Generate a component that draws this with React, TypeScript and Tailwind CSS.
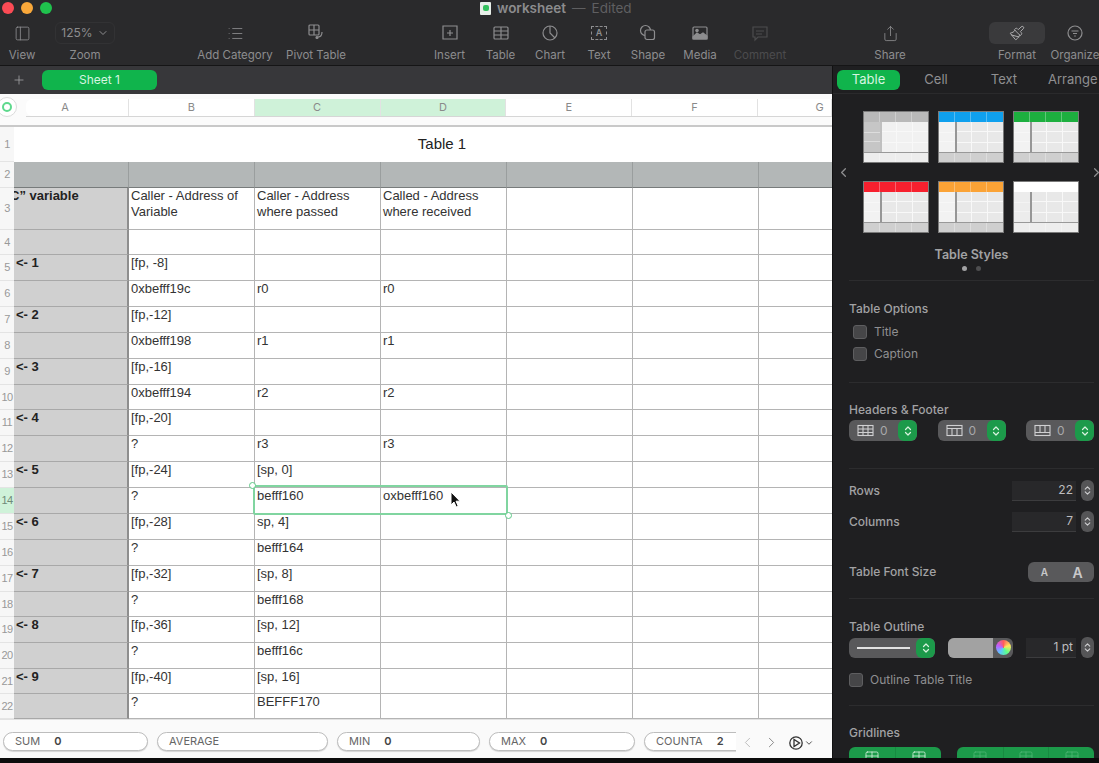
import React from 'react';
import { ChevronDown, ChevronLeft, ChevronRight, ChevronsUpDown, List, PanelLeft, Paintbrush, Plus, Share, Table as TableIcon } from 'lucide-react';

const ui = "font-['Inter','Liberation_Sans',sans-serif]";

const ROWS: string[][] = [
  [],
  [],
  ['C” variable', 'Caller - Address of Variable', 'Caller - Address where passed', 'Called - Address where received'],
  [],
  ['<- 1', '[fp, -8]'],
  ['', '0xbefff19c', 'r0', 'r0'],
  ['<- 2', '[fp,-12]'],
  ['', '0xbefff198', 'r1', 'r1'],
  ['<- 3', '[fp,-16]'],
  ['', '0xbefff194', 'r2', 'r2'],
  ['<- 4', '[fp,-20]'],
  ['', '?', 'r3', 'r3'],
  ['<- 5', '[fp,-24]', '[sp, 0]'],
  ['', '?', 'befff160', 'oxbefff160'],
  ['<- 6', '[fp,-28]', 'sp, 4]'],
  ['', '?', 'befff164'],
  ['<- 7', '[fp,-32]', '[sp, 8]'],
  ['', '?', 'befff168'],
  ['<- 8', '[fp,-36]', '[sp, 12]'],
  ['', '?', 'befff16c'],
  ['<- 9', '[fp,-40]', '[sp, 16]'],
  ['', '?', 'BEFFF170'],
];

const Glyph = ({ children, className = '' }: { children: React.ReactNode; className?: string }) => (
  <svg width="20" height="20" viewBox="0 0 20 20" fill="none" stroke="currentColor" strokeWidth="1.2" className={className}>
    {children}
  </svg>
);

const ToolItem = ({ label, width, children, dim, active }: { label: string; width: string; children: React.ReactNode; dim?: boolean; active?: boolean }) => (
  <div className={`flex shrink-0 flex-col items-center ${width} ${dim ? 'text-[#4c4c4e]' : 'text-[#8d8d8f]'}`}>
    <div className={`flex h-[22px] items-center justify-center ${active ? 'w-[56px] rounded-md bg-[#3a3a3c] text-[#b4b4b6]' : ''}`}>{children}</div>
    <span className="mt-[4px] whitespace-nowrap text-[11.5px] leading-[14px]">{label}</span>
  </div>
);

const Toolbar = () => (
  <div className="flex h-[66px] shrink-0 flex-col border-b border-[#151516] bg-[#2a2a2c]">
    <div className="relative flex h-[16px] items-center">
      <div className="ml-[2px] flex gap-[7px]">
        <span className="size-[12px] rounded-full bg-[#fb4b55]" />
        <span className="size-[12px] rounded-full bg-[#f9a83a]" />
        <span className="size-[12px] rounded-full bg-[#1fc24d]" />
      </div>
      <div className="ml-[428px] flex items-center gap-[6px] text-[13.5px] leading-[14px] text-[#8c8c8e]">
        <span className="flex h-[13px] w-[11px] items-center justify-center rounded-[1px] bg-[#e8efe9]">
          <span className="size-[6px] rounded-[2px] bg-[#33c15e]" />
        </span>
        <span className="font-semibold">worksheet</span>
        <span className="text-[#5f5f61]">—</span>
        <span className="text-[#5f5f61]">Edited</span>
      </div>
    </div>
    <div className="mt-[6px] flex items-start">
      <ToolItem label="View" width="w-[44px]"><PanelLeft size={17} strokeWidth={1.2} /></ToolItem>
      <ToolItem label="Zoom" width="w-[82px]">
        <div className="flex h-[22px] w-[60px] items-center justify-center gap-1 rounded-md border border-[#323234] text-[12px]">
          125% <ChevronDown size={12} />
        </div>
      </ToolItem>
      <div className="w-[64px] shrink-0" />
      <ToolItem label="Add Category" width="w-[90px]"><List size={17} strokeWidth={1.2} /></ToolItem>
      <ToolItem label="Pivot Table" width="w-[72px]">
        <Glyph>
          <rect x="3" y="2" width="10" height="10" rx="1" />
          <path d="M3 7h10M8 2v10M16 9c0 3-1.500 5-4 5" />
          <circle cx="11" cy="14.500" r="1" fill="currentColor" />
        </Glyph>
      </ToolItem>
      <div className="w-[73px] shrink-0" />
      <ToolItem label="Insert" width="w-[49px]">
        <Glyph>
          <path d="M3 3h14v13H3z" />
          <path d="M10 7v6M7 10h6" />
        </Glyph>
      </ToolItem>
      <ToolItem label="Table" width="w-[53px]">
        <Glyph>
          <rect x="3" y="4" width="14" height="12" rx="1" />
          <path d="M3 8h14M3 12h14M10 4v12" />
        </Glyph>
      </ToolItem>
      <ToolItem label="Chart" width="w-[46px]">
        <Glyph>
          <circle cx="10" cy="10" r="7" />
          <path d="M10 3v7l5 5" />
        </Glyph>
      </ToolItem>
      <ToolItem label="Text" width="w-[52px]">
        <div className="flex h-[14px] w-[16px] items-center justify-center border border-dashed border-current text-[9px] font-semibold">A</div>
      </ToolItem>
      <ToolItem label="Shape" width="w-[46px]">
        <Glyph>
          <circle cx="7.500" cy="7.500" r="5" />
          <rect x="7" y="7" width="9.500" height="9.500" rx="2" fill="#2a2a2c" />
        </Glyph>
      </ToolItem>
      <ToolItem label="Media" width="w-[58px]">
        <Glyph>
          <rect x="3" y="4" width="14" height="12" rx="1" />
          <path d="M3 14l4-4 3 2 3-2 4 3v3H3z" fill="currentColor" />
          <circle cx="7" cy="7.500" r="1.200" fill="currentColor" />
        </Glyph>
      </ToolItem>
      <ToolItem label="Comment" width="w-[62px]" dim>
        <Glyph>
          <path d="M3 4h14v10H8l-3 3v-3H3z" />
          <path d="M6 8h8M6 11h6" />
        </Glyph>
      </ToolItem>
      <div className="w-[69px] shrink-0" />
      <ToolItem label="Share" width="w-[60px]"><Share size={17} strokeWidth={1.2} /></ToolItem>
      <div className="w-[65px] shrink-0" />
      <ToolItem label="Format" width="w-[64px]" active><Paintbrush size={16} strokeWidth={1.4} /></ToolItem>
      <ToolItem label="Organize" width="w-[52px]">
        <Glyph>
          <circle cx="10" cy="10" r="7" />
          <path d="M6.500 8h7M8 10.500h4M9.200 13h1.600" />
        </Glyph>
      </ToolItem>
    </div>
  </div>
);

const COLUMN_HEADERS: [string, string][] = [
  ['A', 'w-[103px] rounded-l-md bg-white pr-[24px]'],
  ['B', 'w-[126px] bg-white'],
  ['C', 'w-[126px] bg-[#cff2d9]'],
  ['D', 'w-[126px] bg-[#cff2d9]'],
  ['E', 'w-[126px] bg-white'],
  ['F', 'w-[126px] bg-white'],
  ['G', 'w-[74px] bg-white pl-[50px]'],
];

const ColumnRuler = () => (
  <div className="flex h-[33px] shrink-0 items-start border-b-2 border-[#c9c9c9] bg-[#fbfbfb]">
    <div className="mt-[3px] flex size-[20px] -translate-x-[3px] items-center justify-center rounded-full border border-[#dcdcdc] bg-white">
      <span className="size-[10px] rounded-full border-2 border-[#5ed98d]" />
    </div>
    <div className="ml-[6px] mt-[5px] flex overflow-hidden border-b border-[#d6d6d6]">
      {COLUMN_HEADERS.map(([name, cls]) => (
        <div key={name} className={`flex h-[17px] items-center justify-center border-r border-[#e2e2e2] text-[11px] text-[#8a8a8a] ${cls}`}>
          {name}
        </div>
      ))}
    </div>
  </div>
);

const SheetGrid = () => (
  <div className="relative h-[592px] shrink-0 overflow-hidden bg-white font-['Liberation_Sans',sans-serif]">
    <div className="grid w-[885px] grid-cols-[14px_115px_126px_126px_126px_126px_126px_126px] grid-rows-[35px_26px_42px_25px_26px_26px_26px_26px_26px_25px_26px_26px_26px_26px_26px_26px_26px_25px_26px_26px_25px_25px]">
      {ROWS.map((row, r) => (
        <React.Fragment key={r}>
          <div className={`flex items-center justify-center overflow-hidden border-b border-[#e4e4e4] text-[11px] tracking-[-0.5px] ${r === 13 ? 'bg-[#cff2d9] text-[#6f8a78]' : 'bg-[#f7f7f7] text-[#999999]'}`}>
            {r + 1}
          </div>
          {r === 0 ? (
            <div className="col-span-7 flex items-center justify-center pr-[15px] text-[15px] text-[#222222]">Table 1</div>
          ) : (
            [0, 1, 2, 3, 4, 5, 6].map((c) => (
              <div
                key={c}
                className={`overflow-hidden border-b text-[13px] leading-[16px] ${
                  r === 1
                    ? 'border-[#777b7b] border-r-[#9a9e9e] bg-[#b3b7b7] border-r'
                    : c === 0
                      ? 'border-[#a8a8a8] border-r-[#8e8e8e] border-r-2 bg-[#d0d0d0] font-bold text-[#222222]'
                      : 'border-[#b4b4b4] border-r border-r-[#b4b4b4] text-[#333333]'
                } ${c === 0 ? (r === 2 ? '' : 'pl-[2px]') : 'pl-[2px]'}`}
              >
                <span className={`block ${c === 0 && r === 2 ? '-ml-[4px] whitespace-nowrap' : ''}`}>{row[c] ?? ''}</span>
              </div>
            ))
          )}
        </React.Fragment>
      ))}
    </div>
    {/* selection over row 14, C:D */}
    <div className="absolute left-[253px] top-[358px] h-[30px] w-[255px] rounded-[2px] border-2 border-[#80d5a0]" />
    <span className="absolute left-[249px] top-[355px] size-[7px] rounded-full border border-[#5ec987] bg-white" />
    <span className="absolute left-[505px] top-[385px] size-[7px] rounded-full border border-[#5ec987] bg-white" />
    <svg width="12" height="18" viewBox="0 0 12 18" className="absolute left-[450px] top-[364px]">
      <path d="M1 1v13l3-3 2.200 5 2-1-2.200-4.800H10z" fill="#111111" stroke="#ffffff" strokeWidth="1" />
    </svg>
  </div>
);

const Formula = ({ name, value, width }: { name: string; value?: string; width: string }) => (
  <div className={`flex h-[19px] shrink-0 items-center gap-[14px] rounded-full border border-[#bdbdbd] bg-white pl-[11px] text-[11px] shadow-[0_1px_1px_rgba(0,0,0,0.15)] ${width}`}>
    <span className="text-[#666666]">{name}</span>
    {value && <span className="font-semibold text-[#444444]">{value}</span>}
  </div>
);

const StatusBar = () => (
  <div className={`flex h-[39px] shrink-0 items-center border-t border-[#e2e2e2] bg-[#fafafa] pl-[3px] pt-[7px] ${ui}`}>
    <div className="flex h-[21px] w-[733px] shrink-0 gap-[9px] overflow-hidden">
      <Formula name="SUM" value="0" width="w-[145px]" />
      <Formula name="AVERAGE" width="w-[171px]" />
      <Formula name="MIN" value="0" width="w-[143px]" />
      <Formula name="MAX" value="0" width="w-[146px]" />
      <Formula name="COUNTA" value="2" width="w-[110px]" />
    </div>
    <ChevronLeft size={17} strokeWidth={1.2} className="ml-[3px] text-[#b5b5b5]" />
    <ChevronRight size={17} strokeWidth={1.2} className="ml-[7px] text-[#777777]" />
    <div className="ml-[8px] flex items-center text-[#333333]">
      <svg width="16" height="16" viewBox="0 0 16 16" fill="none" stroke="currentColor" strokeWidth="1.3">
        <circle cx="8" cy="8" r="6.200" />
        <path d="M6 4.500v7L11.500 8z" />
      </svg>
      <ChevronDown size={10} strokeWidth={2} />
    </div>
  </div>
);

const CELLS_4 = [0, 1, 2, 3];
const CELLS_9 = [0, 1, 2, 3, 4, 5, 6, 7, 8];

const TableThumb = ({ header, stub, footer, body = 'bg-[#e8e8e8]', lines = 'bg-[#969696]' }: { header: string; stub: string; footer: string; body?: string; lines?: string }) => (
  <div className="flex h-[52px] w-[66px] flex-col border border-[#7a7a7a] bg-[#f6f6f6]">
    <div className={`grid h-[10px] shrink-0 grid-cols-4 ${header}`}>
      {CELLS_4.map((c) => (
        <span key={c} className="border-r border-white/30 last:border-r-0" />
      ))}
    </div>
    <div className="flex flex-1">
      <div className={`flex w-[16px] flex-col gap-px ${stub}`}>
        <span className="flex-1" />
        <span className="flex-1 border-y border-white/40" />
        <span className="flex-1" />
      </div>
      <div className={`w-[1.5px] ${lines}`} />
      <div className="grid flex-1 grid-cols-3 grid-rows-3 gap-px bg-[#f8f8f8]">
        {CELLS_9.map((c) => (
          <span key={c} className={body} />
        ))}
      </div>
    </div>
    <div className={`grid h-[10px] shrink-0 grid-cols-4 border-t border-[#999999] ${footer}`}>
      {CELLS_4.map((c) => (
        <span key={c} className="border-r border-white/30 last:border-r-0" />
      ))}
    </div>
  </div>
);

const Divider = () => <div className="ml-[16px] h-px w-[245px] bg-[#2c2c2e]" />;

const Check = ({ label }: { label: string }) => (
  <div className="flex h-[22px] items-center gap-[7px]">
    <span className="size-[14px] rounded-[3px] border border-[#5e5e60] bg-[#464648]" />
    <span className="text-[12px] text-[#8f8f91]">{label}</span>
  </div>
);

const GreenArrows = ({ className }: { className: string }) => (
  <div className={`flex items-center justify-center bg-[#1c9a4a] text-[#d8f2df] ${className}`}>
    <ChevronsUpDown size={12} strokeWidth={2.4} />
  </div>
);

const HeaderStepper = ({ children }: { children: React.ReactNode }) => (
  <div className="flex h-[21px] w-[68px] items-center overflow-hidden rounded-md bg-[#59595b] pl-[8px] text-[12px] text-[#a8a8aa]">
    <svg width="17" height="13" viewBox="0 0 17 13" fill="none" stroke="#d0d0d2" strokeWidth="1.1">
      {children}
    </svg>
    <span className="ml-[6px] flex-1">0</span>
    <GreenArrows className="h-full w-[19px] rounded-md" />
  </div>
);

const UpDown = () => (
  <div className="flex h-[21px] w-[13px] flex-col items-center justify-center rounded-md bg-[#555557] text-[#d0d0d2]">
    <ChevronsUpDown size={11} strokeWidth={2.4} />
  </div>
);

const NumberRow = ({ label, value }: { label: string; value: string }) => (
  <div className="flex h-[31px] items-center">
    <span className="flex-1 text-[12px] font-medium text-[#a2a2a4]">{label}</span>
    <div className="mr-[5px] flex h-[20px] w-[64px] items-center justify-end border-b border-[#3c3c3e] bg-[#28282a] pr-[3px] text-[12px] text-[#bdbdbf]">{value}</div>
    <UpDown />
  </div>
);

const Heading = ({ children }: { children: React.ReactNode }) => (
  <div className="text-[12px] font-medium leading-[16px] text-[#a2a2a4]">{children}</div>
);

const Inspector = () => (
  <div className={`w-[267px] shrink-0 overflow-hidden border-l border-[#111112] bg-[#1f1f21] ${ui}`}>
    <div className="flex h-[28px] items-center border-b border-[#2a2a2c] pl-[4px] text-[13px] text-[#8f8f91]">
      <span className="flex h-[20px] w-[63px] items-center justify-center rounded-md bg-[#10b44c] text-[#d6f5e0]">Table</span>
      <span className="w-[72px] text-center">Cell</span>
      <span className="w-[64px] text-center">Text</span>
      <span className="ml-[12px] whitespace-nowrap">Arrange</span>
    </div>

    <div className="h-[186px] pt-[17px]">
      <div className="flex items-center pl-[3px]">
        <div className="w-[27px] shrink-0 text-[#8f8f91]"><ChevronLeft size={15} /></div>
        <div className="grid shrink-0 grid-cols-[66px_66px_66px] gap-x-[9px] gap-y-[18px]">
          <TableThumb header="bg-[#b9b9b9]" stub="bg-[#c6c6c6]" footer="bg-[#ededed]" body="bg-[#f1f1f1]" lines="bg-[#c0c0c0]" />
          <TableThumb header="bg-[#0fa0ee]" stub="bg-[#f2f2f2]" footer="bg-[#cfcfcf]" />
          <TableThumb header="bg-[#1daf3f]" stub="bg-[#f2f2f2]" footer="bg-[#cfcfcf]" />
          <TableThumb header="bg-[#f7202e]" stub="bg-[#f2f2f2]" footer="bg-[#cfcfcf]" />
          <TableThumb header="bg-[#fba336]" stub="bg-[#f2f2f2]" footer="bg-[#cfcfcf]" />
          <TableThumb header="bg-white" stub="bg-[#ececec]" footer="bg-[#ededed]" />
        </div>
        <ChevronRight size={15} className="ml-[10px] shrink-0 text-[#8f8f91]" />
      </div>
      <div className="mt-[14px] pl-[11px] text-center text-[12.5px] font-semibold leading-[16px] text-[#a2a2a4]">Table Styles</div>
      <div className="mt-[3px] flex justify-center gap-[9px] pl-[11px]">
        <span className="size-[5px] rounded-full bg-[#a2a2a4]" />
        <span className="size-[5px] rounded-full bg-[#4e4e50]" />
      </div>
    </div>
    <Divider />

    <div className="h-[101px] pl-[16px] pt-[20px]">
      <Heading>Table Options</Heading>
      <div className="ml-[4px] mt-[4px]">
        <Check label="Title" />
        <Check label="Caption" />
      </div>
    </div>
    <Divider />

    <div className="h-[85px] px-[16px] pt-[19px]">
      <Heading>Headers &amp; Footer</Heading>
      <div className="mt-[2px] flex w-[245px] justify-between">
        <HeaderStepper>
          <rect x="1" y="1.500" width="15" height="10" />
          <path d="M1 5h15M1 8.500h15M6 1.500v10M11 1.500v10" />
        </HeaderStepper>
        <HeaderStepper>
          <rect x="1" y="1.500" width="15" height="10" />
          <path d="M1 4.500h15M6 4.500v7M11 4.500v7" />
        </HeaderStepper>
        <HeaderStepper>
          <rect x="1" y="1.500" width="15" height="10" />
          <path d="M1 8.500h15M6 1.500v7M11 1.500v7" />
        </HeaderStepper>
      </div>
    </div>
    <Divider />

    <div className="h-[129px] px-[16px] pt-[6px]">
      <div className="w-[245px]">
        <NumberRow label="Rows" value="22" />
        <NumberRow label="Columns" value="7" />
      </div>
      <div className="mt-[25px] flex w-[245px] items-center justify-between">
        <span className="text-[12px] font-medium text-[#a2a2a4]">Table Font Size</span>
        <div className="flex h-[20px] w-[66px] items-center overflow-hidden rounded-md bg-[#59595b] text-[#c8c8ca]">
          <span className="w-[33px] text-center text-[10px] font-semibold">A</span>
          <span className="w-[33px] text-center text-[14px] font-semibold">A</span>
        </div>
      </div>
    </div>
    <Divider />

    <div className="h-[106px] px-[16px] pt-[20px]">
      <Heading>Table Outline</Heading>
      <div className="mt-[2px] flex w-[245px] items-center">
        <div className="flex h-[20px] w-[86px] items-center overflow-hidden rounded-md bg-[#59595b] pl-[8px]">
          <span className="h-[2px] w-[53px] bg-[#e2e2e2]" />
          <GreenArrows className="ml-auto h-full w-[19px] rounded-md" />
        </div>
        <div className="ml-[13px] flex h-[20px] w-[65px] overflow-hidden rounded-md bg-[#59595b]">
          <span className="w-[45px] bg-[#a2a2a2]" />
          <span className="m-auto size-[15px] rounded-full bg-[conic-gradient(#ff5c5c,#ffe45c,#5cff8a,#5cc8ff,#c05cff,#ff5c5c)]" />
        </div>
        <div className="ml-[13px] flex h-[20px] w-[50px] items-center justify-end border-b border-[#3c3c3e] bg-[#28282a] pr-[3px] text-[12px] text-[#bdbdbf]">1 pt</div>
        <div className="ml-[5px]"><UpDown /></div>
      </div>
      <div className="mt-[13px] flex items-center gap-[7px]">
        <span className="size-[14px] rounded-[3px] border border-[#5e5e60] bg-[#464648]" />
        <span className="text-[12px] text-[#8f8f91]">Outline Table Title</span>
      </div>
    </div>
    <Divider />

    <div className="px-[16px] pt-[19px]">
      <Heading>Gridlines</Heading>
      <div className="mt-[6px] flex w-[245px] justify-between">
        <div className="flex h-[20px] w-[92px] rounded-t-md bg-[#1c9a4a] text-[#d8f2df]">
          <span className="flex w-1/2 justify-center pt-[3px]"><TableIcon size={16} strokeWidth={1.2} /></span>
          <span className="flex w-1/2 justify-center border-l border-[#188a41] pt-[3px]"><TableIcon size={16} strokeWidth={1.2} /></span>
        </div>
        <div className="flex h-[20px] w-[137px] rounded-t-md bg-[#1c9a4a] text-[#4fb574]">
          <span className="flex w-1/3 justify-center pt-[3px]"><TableIcon size={16} strokeWidth={1.2} /></span>
          <span className="flex w-1/3 justify-center border-l border-[#188a41] pt-[3px]"><TableIcon size={16} strokeWidth={1.2} /></span>
          <span className="flex w-1/3 justify-center border-l border-[#188a41] pt-[3px]"><TableIcon size={16} strokeWidth={1.2} /></span>
        </div>
      </div>
    </div>
  </div>
);

export default function App() {
  return (
    <div className={`relative flex h-[763px] w-[1099px] flex-col overflow-hidden bg-[#0c0c0c] ${ui}`}>
      <Toolbar />
      <div className="flex h-[692px] shrink-0">
        <div className="flex w-[832px] shrink-0 flex-col overflow-hidden">
          <div className="flex h-[28px] shrink-0 items-center bg-[#37373a] pl-[12px] text-[#a2a2a4]">
            <Plus size={14} strokeWidth={1.4} />
            <span className="ml-[16px] flex h-[20px] w-[115px] items-center justify-center rounded-md bg-[#10b44c] text-[12px] text-[#d6f5e0]">Sheet 1</span>
          </div>
          <ColumnRuler />
          <SheetGrid />
          <StatusBar />
        </div>
        <Inspector />
      </div>
    </div>
  );
}
